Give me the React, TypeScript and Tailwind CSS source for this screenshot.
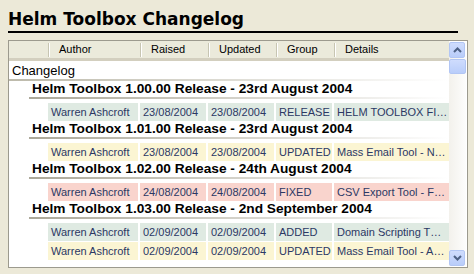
import React from 'react';

type Row = { author: string; raised: string; updated: string; group: string; details: string };
type Release = { title: string; rows: Row[] };

const releases: Release[] = [
  {
    title: 'Helm Toolbox 1.00.00 Release - 23rd August 2004',
    rows: [{ author: 'Warren Ashcroft', raised: '23/08/2004', updated: '23/08/2004', group: 'RELEASE', details: 'HELM TOOLBOX FI…' }],
  },
  {
    title: 'Helm Toolbox 1.01.00 Release - 23rd August 2004',
    rows: [{ author: 'Warren Ashcroft', raised: '23/08/2004', updated: '23/08/2004', group: 'UPDATED', details: 'Mass Email Tool - N…' }],
  },
  {
    title: 'Helm Toolbox 1.02.00 Release - 24th August 2004',
    rows: [{ author: 'Warren Ashcroft', raised: '24/08/2004', updated: '24/08/2004', group: 'FIXED', details: 'CSV Export Tool - F…' }],
  },
  {
    title: 'Helm Toolbox 1.03.00 Release - 2nd September 2004',
    rows: [
      { author: 'Warren Ashcroft', raised: '02/09/2004', updated: '02/09/2004', group: 'ADDED', details: 'Domain Scripting T…' },
      { author: 'Warren Ashcroft', raised: '02/09/2004', updated: '02/09/2004', group: 'UPDATED', details: 'Mass Email Tool - A…' },
    ],
  },
];

const rowBg: Record<string, string> = {
  RELEASE: 'bg-[#dfeae2]',
  ADDED: 'bg-[#dfeae2]',
  UPDATED: 'bg-[#fbf5d3]',
  FIXED: 'bg-[#f9d4cd]',
};

function Arrow({ up }: { up?: boolean }) {
  return (
    <svg width="9" height="6" viewBox="0 0 9 6">
      <path
        d={up ? 'M1 5 L4.5 1.5 L8 5' : 'M1 1 L4.5 4.5 L8 1'}
        fill="none"
        stroke="#4d6185"
        strokeWidth="2"
      />
    </svg>
  );
}

function ScrollBtn({ up }: { up?: boolean }) {
  return (
    <div className="w-[16px] h-[16px] rounded-[2px] border border-[#b2c6f4] bg-gradient-to-b from-[#cfdcfd] to-[#b9cdfa] flex items-center justify-center">
      <Arrow up={up} />
    </div>
  );
}

export default function App() {
  const cols = [
    { label: '', w: 'w-[39px]' },
    { label: 'Author', w: 'w-[92px]' },
    { label: 'Raised', w: 'w-[68px]' },
    { label: 'Updated', w: 'w-[68px]' },
    { label: 'Group', w: 'w-[58px]' },
    { label: 'Details', w: 'flex-1' },
  ];
  return (
    <div className="w-[474px] h-[274px] bg-[#ece9d8] overflow-hidden font-['Liberation_Sans',Arial,sans-serif] text-[11px]">
      <div className="pl-2 pt-[8px]">
        <div className="w-[450px] border-b-2 border-black h-[25px] font-['DejaVu_Sans',sans-serif] font-bold text-[17px] leading-[22px] text-black">
          Helm Toolbox Changelog
        </div>
      </div>
      <div className="ml-2 mt-[7px] w-[460px] h-[228px] border border-[#9c9a8e] bg-white flex">
        <div className="flex-1 flex flex-col">
          <div className="h-[20px] flex bg-[#ebeadb] border-b-[3px] border-[#d3cfbf]">
            {cols.map((c, i) => (
              <div key={i} className={`${c.w} flex items-center`}>
                {i > 0 && <div className="w-[1px] h-[14px] bg-[#c7c5b2] border-r border-white mr-[9px] box-content" />}
                <span className="text-black">{c.label}</span>
              </div>
            ))}
          </div>
          <div className="h-[18px] pl-[3px] flex items-end text-[13px] leading-[16px] text-black">Changelog</div>
          <div className="h-[2px] bg-gradient-to-r from-[#bdbaab] to-white" />
          {releases.map((r) => (
            <div key={r.title} className="flex flex-col">
              <div className="h-[16px] pl-[23px] flex items-end font-bold text-[13.7px] leading-[16px] text-black whitespace-nowrap">
                {r.title}
              </div>
              <div className="ml-[20px] h-[2px] bg-gradient-to-r from-[#aca899] to-white" />
              <div className="h-[4px]" />
              <div className="flex flex-col gap-[1px]">
                {r.rows.map((row, i) => (
                  <div key={i} className={`ml-[39px] h-[18px] flex text-[#2b3864] ${rowBg[row.group]}`}>
                    <div className="w-[92px] pl-[3px] border-r-2 border-white leading-[18px] whitespace-nowrap">{row.author}</div>
                    <div className="w-[68px] pl-[3px] border-r-2 border-white leading-[18px]">{row.raised}</div>
                    <div className="w-[68px] pl-[3px] border-r-2 border-white leading-[18px]">{row.updated}</div>
                    <div className="w-[58px] pl-[3px] border-r-2 border-white leading-[18px]">{row.group}</div>
                    <div className="flex-1 pl-[3px] leading-[18px] whitespace-nowrap overflow-hidden">{row.details}</div>
                  </div>
                ))}
              </div>
            </div>
          ))}
        </div>
        <div className="w-[17px] my-[1px] mr-[1px] bg-gradient-to-r from-[#f3f1ec] to-[#fdfdfc] flex flex-col">
          <ScrollBtn up />
          <div className="h-[15px] mt-[1px] rounded-[2px] border border-[#b2c6f4] bg-gradient-to-b from-[#cfdcfd] to-[#b9cdfa]" />
          <div className="flex-1" />
          <ScrollBtn />
        </div>
      </div>
    </div>
  );
}
